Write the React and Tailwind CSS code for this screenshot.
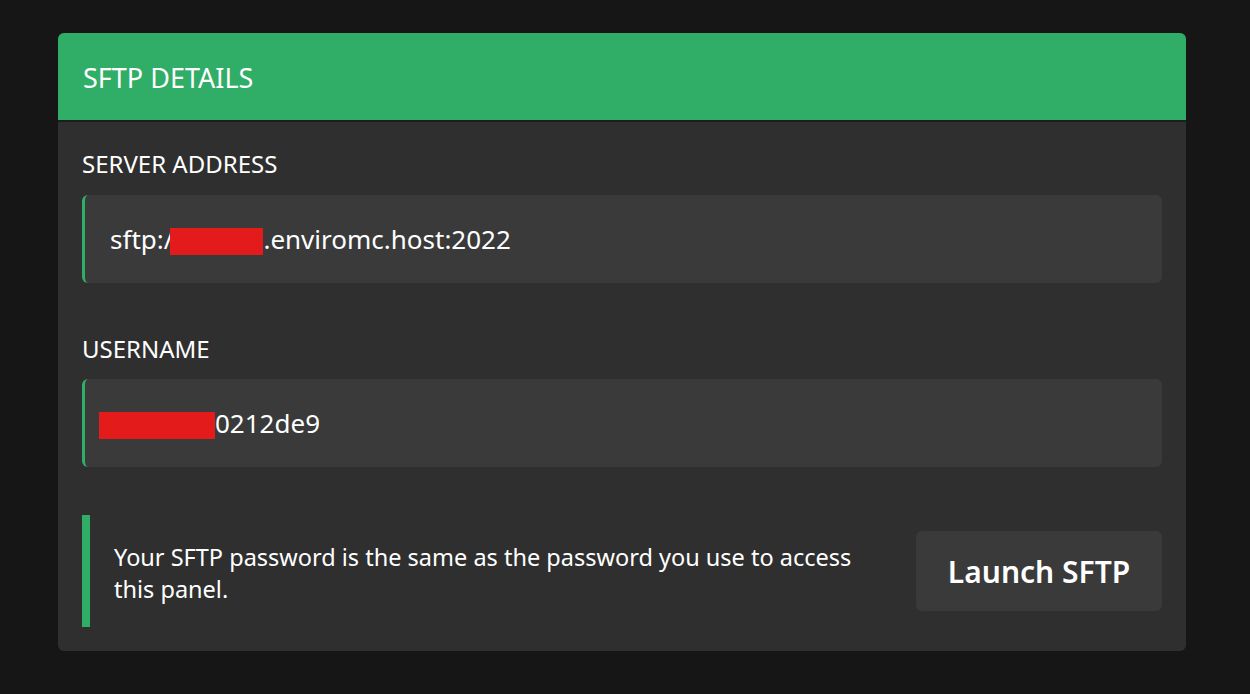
export default function App() {
  const font = { fontFamily: "'Noto Sans', 'Open Sans', sans-serif" };
  return (
    <div className="min-h-screen w-full bg-[#161616] pt-[33px] px-[58px]" style={font}>
      <div className="w-[1128px] rounded-md overflow-hidden bg-[#2f2f2f]">
        {/* Header */}
        <div className="h-[89px] bg-[#30ad66] border-b-2 border-[#1e1e1e] flex items-center px-[25px] pt-[4px]">
          <h2 className="text-[27px] text-white uppercase">SFTP Details</h2>
        </div>

        <div className="px-6 pt-[26px] pb-6">
          {/* Server address */}
          <div className="text-[24px] text-white uppercase leading-[32px]">Server Address</div>
          <div className="mt-[15px] h-[88px] rounded-md bg-[#3a3a3a] border-l-[3px] border-[#30ad66] flex items-center pl-[25px]">
            <span className="text-[26px] text-white">
              sftp:/<span className="inline-block align-middle w-[93px] h-[27px] bg-[#e31b1b] -ml-[3px]"></span>.enviromc.host:2022
            </span>
          </div>

          {/* Username */}
          <div className="mt-[50px] text-[24px] text-white uppercase leading-[32px]">Username</div>
          <div className="mt-[14px] h-[88px] rounded-md bg-[#3a3a3a] border-l-[3px] border-[#30ad66] flex items-center pl-[14px]">
            <span className="text-[26px] text-white">
              <span className="inline-block align-middle w-[116px] h-[27px] bg-[#e31b1b]"></span>0212de9
            </span>
          </div>

          {/* Notice + button */}
          <div className="mt-[48px] flex items-center justify-between">
            <div className="flex-1 h-[112px] border-l-[8px] border-[#30ad66] flex items-center pl-[24px] pt-[4px]">
              <p className="text-[23.5px] leading-[32px] text-white max-w-[760px]">
                Your SFTP password is the same as the password you use to access this panel.
              </p>
            </div>
            <button className="w-[246px] h-[80px] rounded-md bg-[#3a3a3a] text-white text-[30px] font-semibold">
              Launch SFTP
            </button>
          </div>
        </div>
      </div>
    </div>
  );
}
